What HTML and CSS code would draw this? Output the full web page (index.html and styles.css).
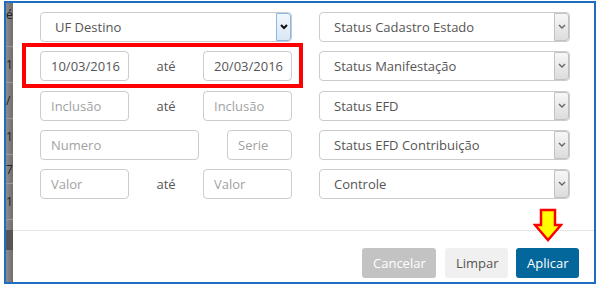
FILE: index.html
```html
<!DOCTYPE html>
<html lang="pt-BR">
<head>
    <meta charset="UTF-8">
    <meta name="viewport" content="width=device-width, initial-scale=1.0">
    <title>Filtros</title>
    <link rel="stylesheet" href="styles.css">
</head>
<body>
    <div class="frame">
        <div class="backdrop">
            <div class="back-row back-head">é</div>
            <div class="back-row">1</div>
            <div class="back-row">/</div>
            <div class="back-row">1</div>
            <div class="back-row back-short">7</div>
            <div class="back-row">1</div>
            <div class="back-gap"></div>
            <div class="back-dark"></div>
        </div>

        <div class="modal">
            <div class="modal-body">
                <div class="col">
                    <div class="select focused">
                        <span class="select-text">UF Destino</span>
                        <span class="caret"><svg width="8" height="6" viewBox="0 0 8 6"><polyline points="1,1 4,4 7,1" /></svg></span>
                    </div>

                    <div class="range highlighted">
                        <input class="field" type="text" value="10/03/2016">
                        <span class="ate">até</span>
                        <input class="field" type="text" value="20/03/2016">
                        <span class="mark"></span>
                    </div>

                    <div class="range">
                        <input class="field" type="text" placeholder="Inclusão">
                        <span class="ate">até</span>
                        <input class="field" type="text" placeholder="Inclusão">
                    </div>

                    <div class="pair">
                        <input class="field field-wide" type="text" placeholder="Numero">
                        <input class="field field-small" type="text" placeholder="Serie">
                    </div>

                    <div class="range">
                        <input class="field" type="text" placeholder="Valor">
                        <span class="ate">até</span>
                        <input class="field" type="text" placeholder="Valor">
                    </div>
                </div>

                <div class="col">
                    <div class="select">
                        <span class="select-text">Status Cadastro Estado</span>
                        <span class="caret"><svg width="8" height="6" viewBox="0 0 8 6"><polyline points="1,1 4,4 7,1" /></svg></span>
                    </div>
                    <div class="select">
                        <span class="select-text">Status Manifestação</span>
                        <span class="caret"><svg width="8" height="6" viewBox="0 0 8 6"><polyline points="1,1 4,4 7,1" /></svg></span>
                    </div>
                    <div class="select">
                        <span class="select-text">Status EFD</span>
                        <span class="caret"><svg width="8" height="6" viewBox="0 0 8 6"><polyline points="1,1 4,4 7,1" /></svg></span>
                    </div>
                    <div class="select">
                        <span class="select-text">Status EFD Contribuição</span>
                        <span class="caret"><svg width="8" height="6" viewBox="0 0 8 6"><polyline points="1,1 4,4 7,1" /></svg></span>
                    </div>
                    <div class="select">
                        <span class="select-text">Controle</span>
                        <span class="caret"><svg width="8" height="6" viewBox="0 0 8 6"><polyline points="1,1 4,4 7,1" /></svg></span>
                    </div>
                </div>
            </div>

            <div class="modal-footer">
                <button class="btn btn-cancel">Cancelar</button>
                <button class="btn btn-clear">Limpar</button>
                <button class="btn btn-apply">Aplicar
                    <svg class="pointer" width="30" height="34" viewBox="0 0 30 34">
                        <polygon points="8,2 22,2 22,17 28,17 15,32 2,17 8,17" />
                    </svg>
                </button>
            </div>
        </div>
    </div>
</body>
</html>
```

FILE: styles.css
```css
* {
    box-sizing: border-box;
}
body {
    margin: 0;
    background-color: white;
    font-family: "Open Sans", Arial, sans-serif;
    font-size: 13px;
    color: #555;
}
.frame {
    margin: 1px 0 0 4px;
    width: 592px;
    height: 283px;
    border: 2px solid #1b6ec2;
    display: flex;
    overflow: hidden;
}

/* table behind the modal */
.backdrop {
    width: 7px;
    flex-shrink: 0;
    display: flex;
    flex-direction: column;
    background: linear-gradient(to right, #8c8c8c, #6e6e6e);
    color: #222;
    font-size: 12px;
    overflow: hidden;
    white-space: nowrap;
}
.back-row {
    height: 36px;
    display: flex;
    align-items: center;
    border-bottom: 1px solid #9a9a9a;
}
.back-head {
    height: 44px;
    align-items: flex-start;
    padding-top: 3px;
}
.back-short {
    height: 29px;
}
.back-gap {
    height: 10px;
}
.back-dark {
    height: 20px;
    background-color: #555;
}

.modal {
    flex: 1;
    background-color: white;
}
.modal-body {
    display: grid;
    grid-template-columns: 252px 251px;
    column-gap: 27px;
    padding: 9px 0 31px 27px;
    border-bottom: 1px solid #e5e5e5;
}
.col {
    display: flex;
    flex-direction: column;
    gap: 9.25px;
}

.select {
    height: 30px;
    display: flex;
    align-items: center;
    border: 1px solid #ccc;
    border-radius: 4px;
    overflow: hidden;
}
.select-text {
    flex: 1;
    padding-left: 14px;
}
.caret {
    align-self: stretch;
    width: 15px;
    display: flex;
    align-items: center;
    justify-content: center;
    border: 1px solid #c2c2c2;
    border-radius: 0 3px 3px 0;
    background: linear-gradient(#f7f7f7, #dcdcdc);
}
.caret polyline {
    fill: none;
    stroke: #666;
    stroke-width: 1.4;
}
.focused .caret {
    border-color: #8ab8e6;
    background: linear-gradient(#f1f6fc, #dae7f5);
}
.focused .caret polyline {
    stroke: #111;
    stroke-width: 2;
}

.range,
.pair {
    display: flex;
    align-items: center;
    justify-content: space-between;
    height: 30px;
}
.ate {
    flex: 1;
    text-align: center;
}
.field {
    width: 89px;
    height: 30px;
    border: 1px solid #ccc;
    border-radius: 4px;
    padding: 0 4px 0 10px;
    font-family: "Open Sans", Arial, sans-serif;
    font-size: 13px;
    color: #555;
}
.field::placeholder {
    color: #a2a2a2;
}
.field-wide {
    width: 159px;
}
.field-small {
    width: 65px;
}

/* red annotation box */
.highlighted {
    position: relative;
}
.mark {
    position: absolute;
    top: -8px;
    left: -18px;
    right: -11px;
    bottom: -7px;
    border: 4px solid #f00;
}

.modal-footer {
    display: flex;
    justify-content: flex-end;
    gap: 8px;
    padding: 17px 15px 0 0;
}
.btn {
    height: 30px;
    padding: 0 11px;
    border: none;
    border-radius: 3px;
    font-family: "Open Sans", Arial, sans-serif;
    font-size: 13px;
}
.btn-cancel {
    width: 74px;
    background-color: #c3c3c3;
    color: white;
    margin-right: 1px;
}
.btn-clear {
    width: 63px;
    background-color: #f0f0f0;
    color: #555;
}
.btn-apply {
    width: 63px;
    background-color: #04679c;
    color: white;
    position: relative;
}
.pointer {
    position: absolute;
    left: 17px;
    bottom: 36px;
}
.pointer polygon {
    fill: #ffff00;
    stroke: #f00;
    stroke-width: 2.5;
    stroke-linejoin: miter;
}
```
